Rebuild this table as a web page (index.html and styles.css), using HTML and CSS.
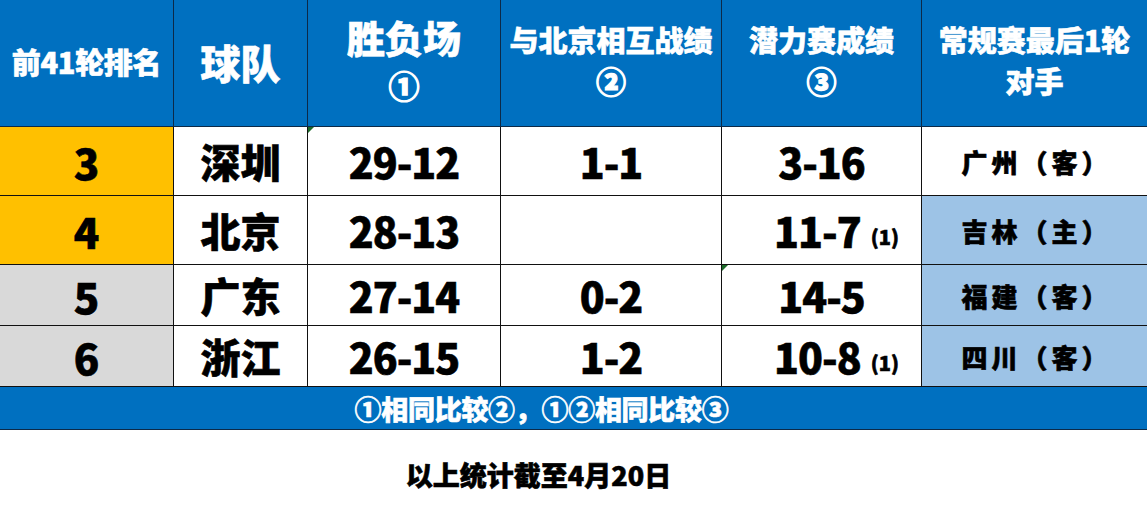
FILE: index.html
```html
<!DOCTYPE html>
<html lang="zh">
<head>
<meta charset="utf-8">
<title>排名</title>
<link rel="stylesheet" href="styles.css">
</head>
<body>
<div class="page">
  <div class="table">
    <div class="cell head"><span class="h-rank">前41轮排名</span></div>
    <div class="cell head"><span class="h-team">球队</span></div>
    <div class="cell head h-col3"><span class="h-big">胜负场</span><span class="h-circ3">①</span></div>
    <div class="cell head h-two"><span>与北京相互战绩</span><span class="circ">②</span></div>
    <div class="cell head h-two"><span>潜力赛成绩</span><span class="circ">③</span></div>
    <div class="cell head h-two"><span>常规赛最后1轮</span><span>对手</span></div>

    <div class="cell rank yellow">3</div>
    <div class="cell team">深圳</div>
    <div class="cell num flag">29-12</div>
    <div class="cell num">1-1</div>
    <div class="cell num">3-16</div>
    <div class="cell opp">广州（客）</div>

    <div class="cell rank yellow">4</div>
    <div class="cell team">北京</div>
    <div class="cell num">28-13</div>
    <div class="cell num"></div>
    <div class="cell num shift">11-7<span class="note">(1)</span></div>
    <div class="cell opp lightblue">吉林（主）</div>

    <div class="cell rank gray">5</div>
    <div class="cell team">广东</div>
    <div class="cell num">27-14</div>
    <div class="cell num">0-2</div>
    <div class="cell num flag">14-5</div>
    <div class="cell opp lightblue">福建（客）</div>

    <div class="cell rank gray">6</div>
    <div class="cell team">浙江</div>
    <div class="cell num">26-15</div>
    <div class="cell num">1-2</div>
    <div class="cell num shift">10-8<span class="note">(1)</span></div>
    <div class="cell opp lightblue">四川（客）</div>
  </div>
  <div class="bar"><span>①相同比较②，①②相同比较③</span></div>
  <div class="footnote"><span>以上统计截至4月20日</span></div>
</div>
</body>
</html>
```

FILE: styles.css
```css
* { box-sizing: border-box; }
html, body { margin: 0; padding: 0; background: #ffffff; }
body {
  font-family: "Noto Sans CJK SC", "Noto Sans", sans-serif;
  font-weight: 900;
  color: #000;
  -webkit-text-stroke: 0.6px currentColor;
}
.page { width: 1147px; height: 521px; overflow: hidden; }

.table {
  display: grid;
  grid-template-columns: 174px 134px 193px 221px 200px 225px;
  grid-template-rows: 127px 69px 69px 61px 61px;
}
.cell {
  position: relative;
  border-right: 1px solid #111;
  border-bottom: 1px solid #111;
  display: flex;
  align-items: center;
  justify-content: center;
  background: #fff;
  white-space: nowrap;
}
.cell:nth-child(6n) { border-right: none; }

.head {
  background: #0070c0;
  color: #fff;
  flex-direction: column;
  border-color: #0c2a48;
}
.h-rank { font-size: 29px; letter-spacing: -0.3px; padding-bottom: 4px; }
.h-team { font-size: 40px; padding-bottom: 2px; }
.h-col3 { padding-bottom: 4px; }
.h-big { font-size: 38px; line-height: 48px; }
.h-circ3 { font-size: 31px; line-height: 48px; -webkit-text-stroke: 1.2px currentColor; }
.h-two { padding-bottom: 6px; }
.h-two span { font-size: 29px; line-height: 41px; }
.h-two .circ { font-size: 30px; -webkit-text-stroke: 1.2px currentColor; }

.rank { font-size: 42px; }
.team { font-size: 40px; }
.num { font-size: 41px; letter-spacing: -1px; }
.shift { padding-left: 30px; }
.note { font-size: 20px; margin-left: 10px; padding-top: 12px; letter-spacing: 0; }
.opp { font-size: 26px; letter-spacing: 4px; padding-left: 4px; }

.yellow { background: #ffc000; }
.gray { background: #d9d9d9; }
.lightblue { background: #9dc3e6; }

.flag::before {
  content: "";
  position: absolute;
  left: 0;
  top: 0;
  width: 0;
  height: 0;
  border-top: 6px solid #1d6b2a;
  border-right: 6px solid transparent;
}

.bar {
  height: 43px;
  background: #0070c0;
  border-bottom: 1px solid #0c2a48;
  color: #fff;
  display: flex;
  align-items: center;
  justify-content: center;
  padding-right: 64px;
  font-size: 27px;
  letter-spacing: -0.3px;
}
.footnote {
  height: 92px;
  display: flex;
  align-items: center;
  justify-content: center;
  padding-right: 70px;
  padding-bottom: 4px;
  font-size: 27px;
}
```
